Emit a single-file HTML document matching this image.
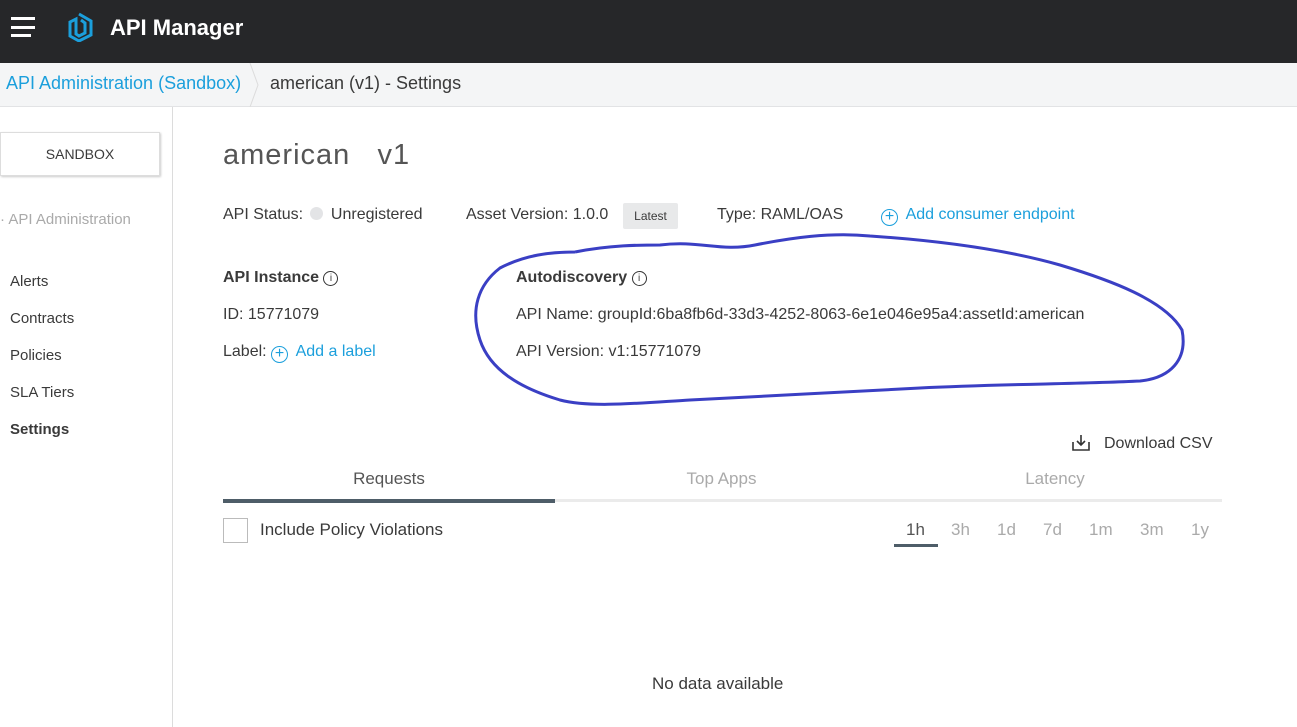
<!DOCTYPE html>
<html><head><style>
*{margin:0;padding:0;box-sizing:border-box}
body{width:1297px;height:727px;overflow:hidden;background:#fff;font-family:"Liberation Sans",sans-serif;color:#3a3a3a;position:relative}
.top{position:absolute;left:0;top:0;width:1297px;height:63px;background:#262729}
.bc{position:absolute;left:0;top:63px;width:1297px;height:44px;background:#f4f5f6;border-bottom:1px solid #e2e3e5}
.a{position:absolute;white-space:nowrap}
.side{position:absolute;left:172px;top:107px;width:1px;height:620px;background:#dcdcdc}
.blue{color:#1b9fdc}
.nav{font-size:15px;color:#3a3a3a}
.pl{display:inline-block;width:17px;height:17px;border:1.5px solid #1b9fdc;border-radius:50%;text-align:center;line-height:13px;font-size:16px;vertical-align:-2px;margin-right:4px}
</style></head><body>
<div class="top"></div>
<div class="a" style="left:11px;top:17px;width:24px;height:3px;background:#fff"></div>
<div class="a" style="left:11px;top:26px;width:24px;height:3px;background:#fff"></div>
<div class="a" style="left:11px;top:34px;width:20px;height:3px;background:#fff"></div>
<svg class="a" style="left:64px;top:12px" width="30" height="30" viewBox="0 0 30 30"><path d="M15 2 L27 9 L27 23 L15 29 L6 24 L6 10 L12 7 L12 22 L15 24 L21 21 L21 11 L17 8" fill="none" stroke="#1b9fdc" stroke-width="3"/></svg>
<div class="a" style="left:110px;top:15px;font-size:22px;font-weight:bold;color:#fff">API Manager</div>
<div class="bc"></div>
<div class="a blue" style="left:6px;top:73px;font-size:18px">API Administration (Sandbox)</div>
<svg class="a" style="left:248px;top:63px" width="14" height="44"><path d="M2 0 L10 22 L2 44" stroke="#dcdcdc" fill="none"/></svg>
<div class="a" style="left:270px;top:73px;font-size:18px">american (v1) - Settings</div>
<div class="side"></div>
<div class="a" style="left:0;top:132px;width:160px;height:44px;border:1px solid #ddd;box-shadow:1px 1px 2px #ccc;font-size:14px;text-align:center;line-height:42px">SANDBOX</div>
<div class="a" style="left:0;top:211px;font-size:15px;color:#aaa">· API Administration</div>
<div class="a nav" style="left:10px;top:273px">Alerts</div>
<div class="a nav" style="left:10px;top:310px">Contracts</div>
<div class="a nav" style="left:10px;top:347px">Policies</div>
<div class="a nav" style="left:10px;top:384px">SLA Tiers</div>
<div class="a nav" style="left:10px;top:421px;font-weight:bold">Settings</div>
<div class="a" style="left:223px;top:139px;font-size:29px;letter-spacing:1px;color:#555">american &nbsp;&nbsp;v1</div>
<div class="a" style="left:223px;top:206px;font-size:16px">API Status: <span style="display:inline-block;width:13px;height:13px;border-radius:50%;background:#e3e4e6;vertical-align:-1px;margin:0 3px"></span> Unregistered</div>
<div class="a" style="left:466px;top:206px;font-size:16px">Asset Version: 1.0.0</div>
<div class="a" style="left:623px;top:203px;width:55px;height:26px;background:#e8e9ea;border-radius:2px;font-size:12px;text-align:center;line-height:26px">Latest</div>
<div class="a" style="left:717px;top:206px;font-size:16px">Type: RAML/OAS</div>
<div class="a blue" style="left:881px;top:206px;font-size:16px"><span class="pl">+</span> Add consumer endpoint</div>
<div class="a" style="left:223px;top:269px;font-size:16px;font-weight:bold">API Instance <span style="display:inline-block;width:15px;height:15px;border:1.3px solid #333;border-radius:50%;font-size:10px;text-align:center;line-height:13px;font-weight:normal;vertical-align:1px">i</span></div>
<div class="a" style="left:223px;top:306px;font-size:16px">ID: 15771079</div>
<div class="a" style="left:223px;top:343px;font-size:16px">Label: <span class="blue"><span class="pl">+</span> Add a label</span></div>
<div class="a" style="left:516px;top:269px;font-size:16px;font-weight:bold">Autodiscovery <span style="display:inline-block;width:15px;height:15px;border:1.3px solid #333;border-radius:50%;font-size:10px;text-align:center;line-height:13px;font-weight:normal;vertical-align:1px">i</span></div>
<div class="a" style="left:516px;top:306px;font-size:16px">API Name: groupId:6ba8fb6d-33d3-4252-8063-6e1e046e95a4:assetId:american</div>
<div class="a" style="left:516px;top:343px;font-size:16px">API Version: v1:15771079</div>
<svg class="a" style="left:0;top:0" width="1297" height="727"><path d="M575 252 C610 245 640 245 660 245 C700 240 720 252 755 245 C790 238 830 232 870 236 C930 240 1000 248 1060 265 C1110 280 1165 300 1182 330 C1188 360 1170 378 1140 381 C1080 384 1000 384 920 388 C850 392 760 396 690 400 C640 403 590 408 560 400 C520 388 490 370 480 340 C470 310 478 285 500 268 C525 255 550 252 575 252" fill="none" stroke="#3a3fc4" stroke-width="3"/></svg>
<svg class="a" style="left:1071px;top:434px" width="20" height="18"><path d="M10 1 V11 M6 7 L10 11 L14 7 M2 8 V16 H18 V8" stroke="#333" stroke-width="1.6" fill="none"/></svg>
<div class="a" style="left:1104px;top:435px;font-size:16px">Download CSV</div>
<div class="a" style="left:223px;top:469px;width:332px;text-align:center;font-size:17px;color:#555">Requests</div>
<div class="a" style="left:555px;top:469px;width:333px;text-align:center;font-size:17px;color:#aaa">Top Apps</div>
<div class="a" style="left:888px;top:469px;width:334px;text-align:center;font-size:17px;color:#aaa">Latency</div>
<div class="a" style="left:223px;top:499px;width:999px;height:3px;background:#ebebeb"></div>
<div class="a" style="left:223px;top:499px;width:332px;height:4px;background:#4e5d68"></div>
<div class="a" style="left:223px;top:518px;width:25px;height:25px;border:1px solid #bbb"></div>
<div class="a" style="left:260px;top:520px;font-size:17px">Include Policy Violations</div>
<div class="a" style="left:906px;top:520px;font-size:17px;color:#555">1h</div>
<div class="a" style="left:894px;top:544px;width:44px;height:3px;background:#4e5d68"></div>
<div class="a" style="left:951px;top:520px;font-size:17px;color:#aaa">3h</div>
<div class="a" style="left:997px;top:520px;font-size:17px;color:#aaa">1d</div>
<div class="a" style="left:1043px;top:520px;font-size:17px;color:#aaa">7d</div>
<div class="a" style="left:1089px;top:520px;font-size:17px;color:#aaa">1m</div>
<div class="a" style="left:1140px;top:520px;font-size:17px;color:#aaa">3m</div>
<div class="a" style="left:1191px;top:520px;font-size:17px;color:#aaa">1y</div>
<div class="a" style="left:652px;top:674px;font-size:17px">No data available</div>
</body></html>
